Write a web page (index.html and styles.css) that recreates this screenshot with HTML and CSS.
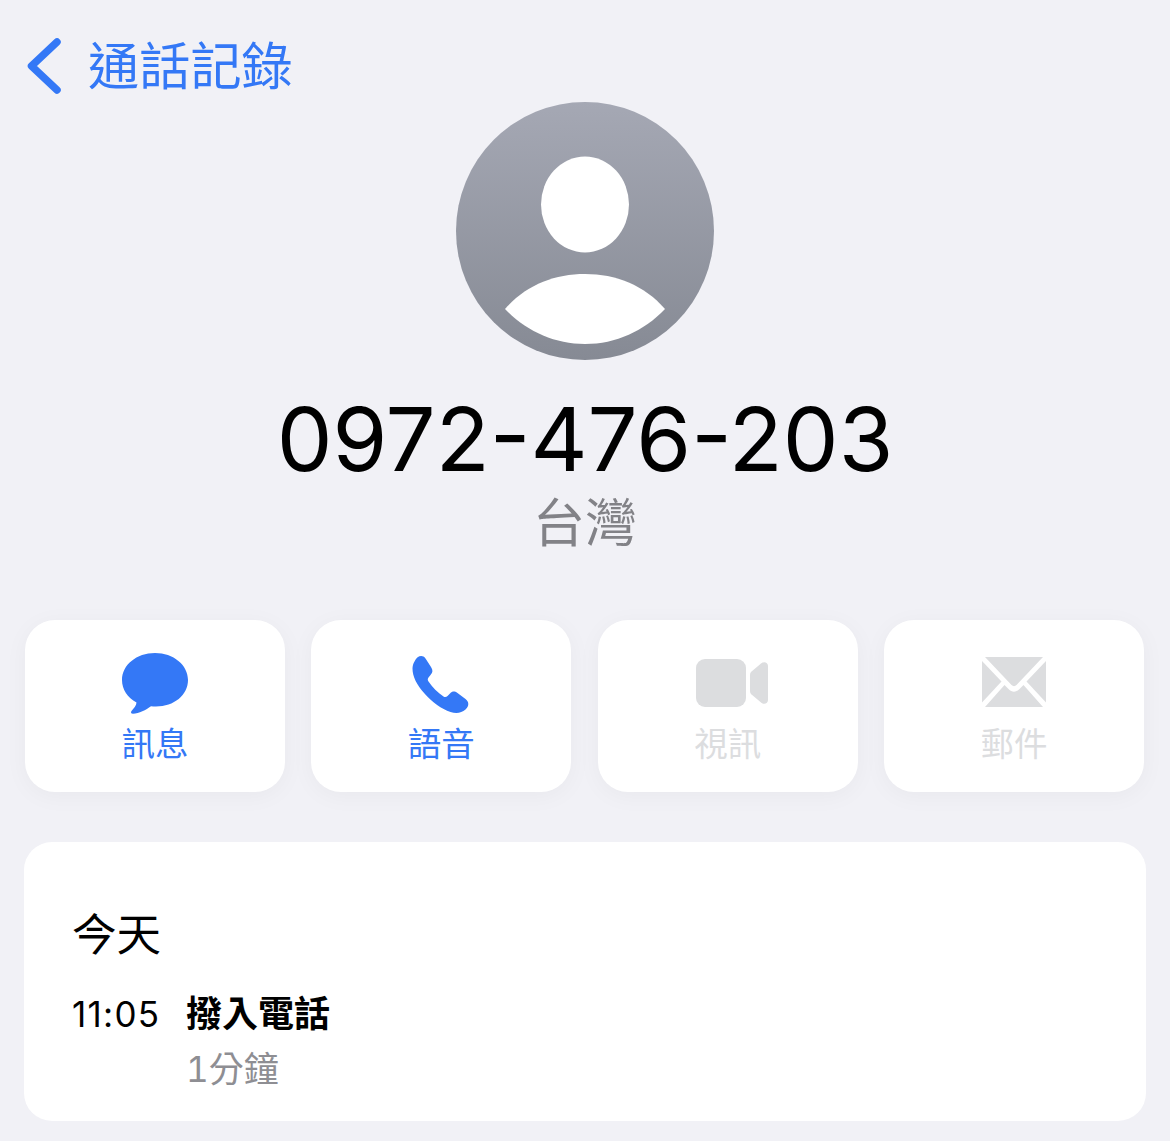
FILE: index.html
```html
<!DOCTYPE html>
<html lang="zh-Hant">
<head>
  <meta charset="UTF-8" />
  <title>通話記錄</title>
  <link rel="stylesheet" href="styles.css">
</head>
<body>

  <div class="nav">
    <svg class="back" viewBox="0 0 34 56" width="34" height="56">
      <path d="M30 4 L4.500 28 L30 52" fill="none" stroke="#3478f6" stroke-width="7.500" stroke-linecap="round" stroke-linejoin="round" />
    </svg>
    <span class="navTitle">通話記錄</span>
  </div>

  <div class="avatar">
    <svg viewBox="0 0 258 258" width="258" height="258">
      <defs>
        <linearGradient id="avatarFill" x1="0" y1="0" x2="0" y2="1">
          <stop offset="0" stop-color="#a5a8b4" />
          <stop offset="1" stop-color="#868a94" />
        </linearGradient>
      </defs>
      <circle cx="129" cy="129" r="129" fill="url(#avatarFill)" />
      <ellipse cx="129" cy="102.500" rx="44" ry="48" fill="#fff" />
      <path d="M49 207 C70 183 98 172 129 172 C160 172 188 183 209 207 C188 229 160 242 129 242 C98 242 70 229 49 207 Z" fill="#fff" />
    </svg>
  </div>

  <div class="number">0972-476-203</div>
  <div class="region">台灣</div>

  <div class="actions">
    <div class="action">
      <svg viewBox="0 0 68 64" width="68" height="64">
        <path d="M34 1 C52.500 1 67 13 67 28 C67 43 53 54.500 35 54.500 C33 54.500 31.500 54.400 30 54.300 C25 58 18 61.500 12 61.800 C10 61.800 9.500 60.500 10.500 59 C12.500 56.500 15.500 53.500 15.500 50.500 C6.500 45.500 1 37.500 1 28 C1 13 15.500 1 34 1 Z" fill="#3478f6" />
      </svg>
      <span class="label">訊息</span>
    </div>
    <div class="action">
      <svg viewBox="0 0 68 64" width="68" height="64">
        <path transform="translate(-6.500 0.500)" d="M14 9 C17 3 22 2 25 6 L30.500 14.500 C32.500 17.500 32.500 20 30 22.500 L28 25 C27 26.500 27 27.500 28 29 C32 35 37 40 43 44 C44.500 45 46 44.500 47 43.500 L49.500 41 C52 38.500 54 38.500 57 40.500 L65 46.500 C69 49.500 68.500 54 65 57 C61 60.500 56 61.500 50 59.500 C41 56.500 32 50 24 41 C16 32 12 24 12 16 C12 13.500 12.800 11 14 9 Z" fill="#3478f6" />
      </svg>
      <span class="label">語音</span>
    </div>
    <div class="action off">
      <svg viewBox="0 0 80 64" width="80" height="64">
        <rect x="8" y="7" width="50" height="48" rx="9" fill="#dcdddf" />
        <path d="M62 23 C62 21.500 62.500 20.500 63.500 19.500 L73 11.500 C76 9 80 10.500 80 14 L80 48 C80 51.500 76 53 73 50.500 L63.500 42.500 C62.500 41.500 62 40.500 62 39 Z" fill="#dcdddf" />
      </svg>
      <span class="label">視訊</span>
    </div>
    <div class="action off">
      <svg viewBox="0 0 68 64" width="68" height="64">
        <g transform="translate(0 2)" fill="#dcdddf">
          <path d="M5 3 L63 3 L36.500 31 C35 32.500 33 32.500 31.500 31 Z" />
          <path d="M2 7 L21.500 27.500 L2 48.500 Z" />
          <path d="M66 7 L46.500 27.500 L66 48.500 Z" />
          <path d="M5 53 L24.500 31 L28.500 35 C32 38.500 36 38.500 39.500 35 L43.500 31 L63 53 Z" />
        </g>
      </svg>
      <span class="label">郵件</span>
    </div>
  </div>

  <div class="history">
    <div class="day">今天</div>
    <div class="call">
      <span class="time">11:05</span>
      <div>
        <div class="callType">撥入電話</div>
        <div class="duration">1分鐘</div>
      </div>
    </div>
  </div>

</body>
</html>
```

FILE: styles.css
```css
body {
  margin: 0;
  height: 1141px;
  overflow: hidden;
  background: #f1f1f6;
  font-family: Inter, "Noto Sans CJK TC", sans-serif;
  color: #000;
}

.nav {
  display: flex;
  align-items: center;
  height: 56px;
  padding: 38px 0 0 27px;
}

.back {
  margin-right: 27px;
}

.navTitle {
  font-size: 51.200px;
  line-height: 56px;
  color: #3478f6;
}

.avatar {
  display: flex;
  justify-content: center;
  margin-top: 8px;
}

.avatar svg {
  display: block;
}

.number {
  margin-top: 31px;
  font-size: 88.500px;
  line-height: 96px;
  text-align: center;
}

.region {
  margin-top: 7px;
  font-size: 52px;
  line-height: 60px;
  text-align: center;
  color: #828287;
}

.actions {
  display: grid;
  grid-template-columns: repeat(4, 260px);
  justify-content: space-between;
  margin: 66px 26px 0 25px;
}

.action {
  display: flex;
  flex-direction: column;
  align-items: center;
  height: 172px;
  padding-top: 32px;
  box-sizing: border-box;
  background: #fff;
  border-radius: 30px;
  box-shadow: 0 4px 24px rgba(0, 0, 30, 0.04);
}

.action svg {
  display: block;
}

.label {
  margin-top: 6px;
  font-size: 33.500px;
  line-height: 44px;
  color: #3478f6;
}

.off .label {
  color: #dcdddf;
}

.history {
  height: 279px;
  box-sizing: border-box;
  margin: 50px 24px 0;
  padding: 63px 48px 0;
  background: #fff;
  border-radius: 28px;
}

.day {
  font-size: 44.500px;
  line-height: 60px;
}

.call {
  display: flex;
  gap: 27px;
  margin-top: 22px;
}

.time {
  width: 87px;
  font-size: 35px;
  line-height: 54px;
  letter-spacing: 1.300px;
  white-space: nowrap;
}

.callType {
  font-size: 36px;
  line-height: 54px;
  font-weight: 700;
}

.duration {
  font-size: 35px;
  line-height: 56px;
  color: #8e8e93;
  font-variant-numeric: tabular-nums;
}
```
